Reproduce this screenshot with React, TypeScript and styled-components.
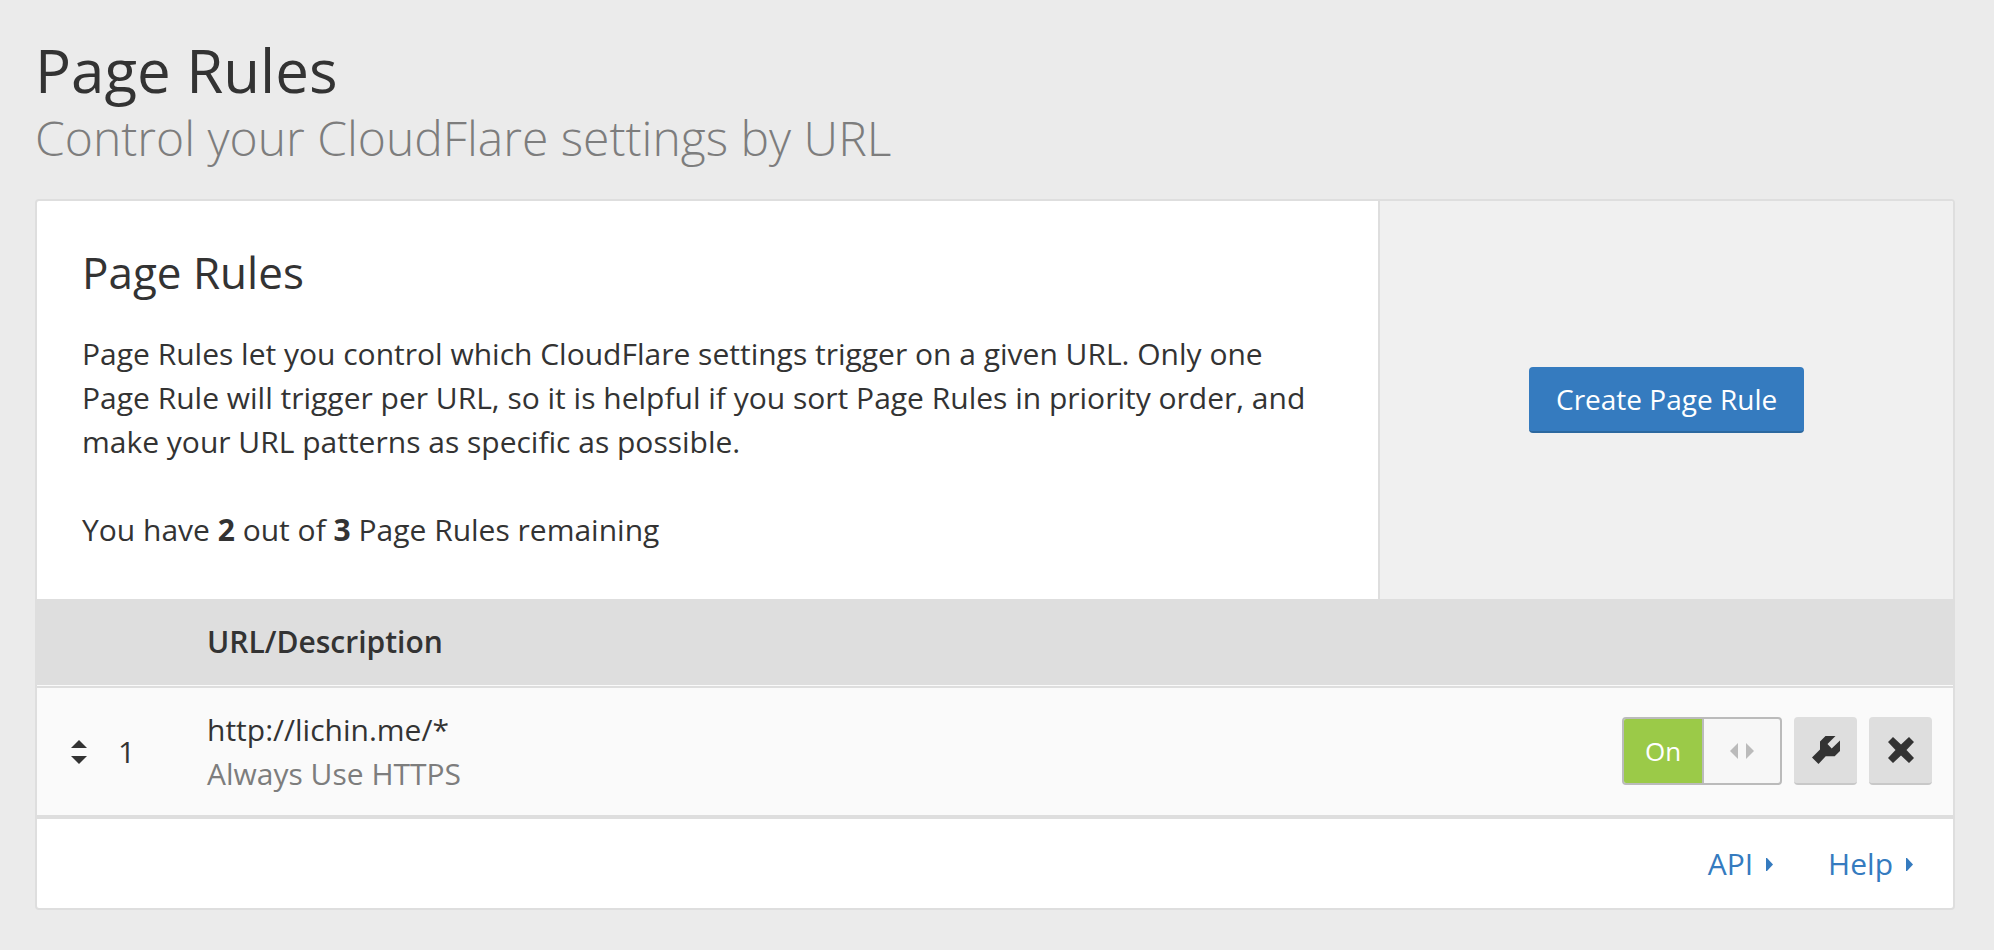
import React, { useState } from "react";
import styled, { createGlobalStyle } from "styled-components";

const GlobalStyle = createGlobalStyle`
  * { box-sizing: border-box; }
  body {
    margin: 0;
    background: #ebebeb;
    color: #333;
    font-family: "Open Sans", sans-serif;
    font-size: 30px;
    line-height: 44px;
  }
  button { font: inherit; cursor: pointer; }
`;

const Page = styled.main`
  padding: 28px 39px 40px 35px;
`;

const Title = styled.h1`
  margin: 0;
  font-size: 60px;
  font-weight: 400;
  line-height: 84px;
`;

const Subtitle = styled.p`
  margin: 0 0 35px;
  color: #7d7d7d;
  font-size: 48px;
  font-weight: 300;
  line-height: 52px;
`;

const Card = styled.section`
  overflow: hidden;
  border: 2px solid #dedede;
  border-radius: 4px;
  background: #fff;
`;

const Intro = styled.div`
  display: grid;
  grid-template-columns: 7fr 3fr;
`;

const Copy = styled.div`
  padding: 41px 45px 47px;

  p { margin: 0 0 44px; }
  p:last-child { margin-bottom: 0; }
`;

const CardTitle = styled.h2`
  margin: 0 0 30px;
  font-size: 44px;
  font-weight: 400;
  line-height: 60px;
`;

const Aside = styled.div`
  display: flex;
  align-items: center;
  justify-content: center;
  border-left: 2px solid #dedede;
  background: #f0f0f0;
`;

const PrimaryButton = styled.button`
  padding: 10px 27px;
  border: 0;
  border-bottom: 2px solid #2c689f;
  border-radius: 4px;
  background: #357bbf;
  color: #fff;
  font-size: 28px;
  font-weight: 500;
`;

const RulesTable = styled.table`
  width: 100%;
  border-spacing: 0;
  text-align: left;

  th {
    padding: 21px 0;
    border-bottom: 1px solid #fafafa;
    background: #dedede;
    font-weight: 600;
  }
  td {
    padding: 20px 0 19px;
    border-top: 2px solid #dedede;
    border-bottom: 4px solid #dedede;
    background: #fafafa;
  }
`;

const PriorityColumn = styled.col`
  width: 170px;
`;

const Priority = styled.div`
  display: flex;
  align-items: center;
  gap: 31px;
  padding-left: 34px;
`;

const SortButton = styled.button`
  display: flex;
  padding: 0;
  border: 0;
  background: none;
  color: #333;
`;

const Description = styled.div`
  color: #7d7d7d;
`;

const Actions = styled.div`
  display: flex;
  justify-content: flex-end;
  gap: 12px;
  padding: 0 21px 2px 0;
`;

const Toggle = styled.label`
  position: relative;
  display: grid;
  grid-template-columns: 80px 1fr;
  width: 160px;
  height: 68px;
  overflow: hidden;
  border: 2px solid #bbb;
  border-radius: 4px;
  background: #f7f7f7;
  cursor: pointer;

  input {
    position: absolute;
    inset: 0;
    width: 100%;
    height: 100%;
    margin: 0;
    opacity: 0;
    cursor: pointer;
  }
`;

const ToggleState = styled.span<{ $on: boolean }>`
  display: flex;
  align-items: center;
  justify-content: center;
  border-right: 2px solid #bbb;
  background: ${(p) => (p.$on ? "#9bca48" : "#f7f7f7")};
  color: ${(p) => (p.$on ? "#fff" : "#333")};
  font-size: 26px;
`;

const ToggleGrip = styled.span`
  display: flex;
  align-items: center;
  justify-content: center;
  color: #bbb;
`;

const IconButton = styled.button`
  display: flex;
  align-items: center;
  justify-content: center;
  width: 63px;
  height: 68px;
  padding: 0;
  border: 0;
  border-bottom: 2px solid #c8c8c8;
  border-radius: 4px;
  background: #dedede;
  color: #333;
`;

const Footer = styled.footer`
  display: flex;
  justify-content: flex-end;
  gap: 55px;
  padding: 23px 40px 22px;
`;

const FooterLink = styled.a`
  display: flex;
  align-items: center;
  gap: 13px;
  color: #357bbf;
  text-decoration: none;
`;

const SortIcon = () => (
  <svg width="16" height="24" viewBox="0 0 16 24" fill="currentColor" aria-hidden="true">
    <path d="M8 0l8 8H0zM0 16h16l-8 8z" />
  </svg>
);

const GripIcon = () => (
  <svg width="24" height="16" viewBox="0 0 24 16" fill="currentColor" aria-hidden="true">
    <path d="M8 0v16L0 8zM16 0l8 8-8 8z" />
  </svg>
);

const WrenchIcon = () => (
  <svg width="28" height="28" viewBox="0 0 28 28" fill="currentColor" aria-hidden="true">
    <path d="M13.500 0h10l-8 8 4.200 4.500L28 4.500V15l-5.300 5.200h-9L6.500 28 0 21.500l8-8V5.500z" />
  </svg>
);

const CrossIcon = () => (
  <svg width="26" height="26" viewBox="0 0 26 26" fill="currentColor" aria-hidden="true">
    <path d="M5 0l8 7.500L21 0l5 5-7.500 8 7.500 8-5 5-8-7.500L5 26l-5-5 7.500-8L0 5z" />
  </svg>
);

const ArrowIcon = () => (
  <svg width="7" height="13" viewBox="0 0 7 13" fill="currentColor" aria-hidden="true">
    <path d="M0 0h1l6 6.500L1 13H0z" />
  </svg>
);

const rules = [{ url: "http://lichin.me/*", description: "Always Use HTTPS" }];

function RuleToggle({ url }: { url: string }) {
  const [on, setOn] = useState(true);
  return (
    <Toggle>
      <input
        type="checkbox"
        role="switch"
        aria-label={`Enable rule for ${url}`}
        checked={on}
        onChange={(e) => setOn(e.target.checked)}
      />
      <ToggleState $on={on}>{on ? "On" : "Off"}</ToggleState>
      <ToggleGrip>
        <GripIcon />
      </ToggleGrip>
    </Toggle>
  );
}

export default function App() {
  return (
    <Page>
      <GlobalStyle />
      <Title>Page Rules</Title>
      <Subtitle>Control your CloudFlare settings by URL</Subtitle>
      <Card>
        <Intro>
          <Copy>
            <CardTitle>Page Rules</CardTitle>
            <p>
              Page Rules let you control which CloudFlare settings trigger on a given URL. Only one
              Page Rule will trigger per URL, so it is helpful if you sort Page Rules in priority
              order, and make your URL patterns as specific as possible.
            </p>
            <p>
              You have <b>2</b> out of <b>3</b> Page Rules remaining
            </p>
          </Copy>
          <Aside>
            <PrimaryButton type="button">Create Page Rule</PrimaryButton>
          </Aside>
        </Intro>
        <RulesTable>
          <colgroup>
            <PriorityColumn />
            <col />
            <col />
          </colgroup>
          <thead>
            <tr>
              <th aria-label="Priority" />
              <th>URL/Description</th>
              <th aria-label="Actions" />
            </tr>
          </thead>
          <tbody>
            {rules.map((rule, i) => (
              <tr key={rule.url}>
                <td>
                  <Priority>
                    <SortButton type="button" aria-label="Reorder rule">
                      <SortIcon />
                    </SortButton>
                    {i + 1}
                  </Priority>
                </td>
                <td>
                  <div>{rule.url}</div>
                  <Description>{rule.description}</Description>
                </td>
                <td>
                  <Actions>
                    <RuleToggle url={rule.url} />
                    <IconButton type="button" aria-label="Edit rule">
                      <WrenchIcon />
                    </IconButton>
                    <IconButton type="button" aria-label="Delete rule">
                      <CrossIcon />
                    </IconButton>
                  </Actions>
                </td>
              </tr>
            ))}
          </tbody>
        </RulesTable>
        <Footer>
          <FooterLink href="#api">
            API <ArrowIcon />
          </FooterLink>
          <FooterLink href="#help">
            Help <ArrowIcon />
          </FooterLink>
        </Footer>
      </Card>
    </Page>
  );
}
